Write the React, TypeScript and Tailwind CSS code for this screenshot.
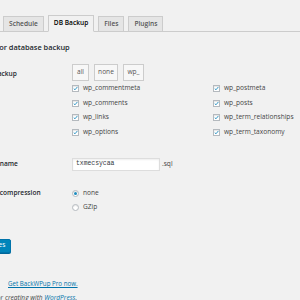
import React from "react";

const Check = () => (
  <span className="w-[7px] h-[7px] bg-white border border-[#b4b9be] shadow-[inset_0_1px_1px_rgba(0,0,0,0.1)] flex items-center justify-center shrink-0">
    <svg width="7" height="7" viewBox="0 0 10 10">
      <path d="M1.5 5.2 L4 7.6 L8.8 1.8" fill="none" stroke="#1e8cbe" strokeWidth="1.8" />
    </svg>
  </span>
);

const Radio = ({ on }: { on?: boolean }) => (
  <span className="w-[7px] h-[7px] rounded-full bg-white border border-[#b4b9be] shadow-[inset_0_1px_1px_rgba(0,0,0,0.1)] flex items-center justify-center shrink-0">
    {on && <span className="w-[3px] h-[3px] rounded-full bg-[#1e8cbe]" />}
  </span>
);

const tablesLeft = ["wp_commentmeta", "wp_comments", "wp_links", "wp_options"];
const tablesRight = ["wp_postmeta", "wp_posts", "wp_term_relationships", "wp_term_taxonomy"];

export default function App() {
  return (
    <div
      className="w-[300px] h-[300px] overflow-hidden bg-[#f1f1f1] text-[#444] text-[6.6px] leading-[1.3]"
      style={{ fontFamily: '"Open Sans", "Noto Sans", sans-serif' }}
    >
      <div className="ml-[-37px] w-[420px] pt-[16px]">
        {/* tabs */}
        <div className="flex items-end gap-[4px] border-b border-[#ccc] h-[16px]">
          <div className="h-[16px] mb-[-1px] border border-[#ccc] bg-[#e5e5e5] text-[#555] font-semibold px-[6px] flex items-center w-[36px] justify-end">General</div>
          <div className="h-[16px] mb-[-1px] border border-[#ccc] bg-[#e5e5e5] text-[#555] font-semibold px-[5px] flex items-center">Schedule</div>
          <div className="h-[17px] mb-[-1px] border border-[#ccc] border-b-[#f1f1f1] bg-[#f1f1f1] text-[#000] font-semibold px-[5px] flex items-center">DB Backup</div>
          <div className="h-[16px] mb-[-1px] border border-[#ccc] bg-[#e5e5e5] text-[#555] font-semibold px-[5px] flex items-center">Files</div>
          <div className="h-[16px] mb-[-1px] border border-[#ccc] bg-[#e5e5e5] text-[#555] font-semibold px-[5px] flex items-center">Plugins</div>
        </div>

        {/* heading */}
        <div className="mt-[10px] ml-[3px] text-[7.4px] font-semibold text-[#23282d] leading-[10px]">
          Settings for database backup
        </div>

        {/* row tables */}
        <div className="flex mt-[12px]">
          <div className="w-[109px] pt-[5px] font-semibold text-[#23282d] leading-[9px]">Tables to backup</div>
          <div className="flex flex-col">
            <div className="flex gap-[5px] h-[17px]">
              <span className="w-[17px] h-[17px] border border-[#ccc] bg-[#f7f7f7] text-[#555] flex items-center justify-center">all</span>
              <span className="w-[24px] h-[17px] border border-[#ccc] bg-[#f7f7f7] text-[#555] flex items-center justify-center">none</span>
              <span className="w-[21px] h-[17px] border border-[#ccc] bg-[#f7f7f7] text-[#555] flex items-center justify-center">wp_</span>
            </div>
            <div className="flex">
              <div className="w-[141px] flex flex-col">
                {tablesLeft.map((t) => (
                  <div key={t} className="h-[14.7px] flex items-center gap-[4px]">
                    <Check />
                    <span>{t}</span>
                  </div>
                ))}
              </div>
              <div className="flex flex-col">
                {tablesRight.map((t) => (
                  <div key={t} className="h-[14.7px] flex items-center gap-[4px]">
                    <Check />
                    <span>{t}</span>
                  </div>
                ))}
              </div>
            </div>
          </div>
        </div>

        {/* row file name */}
        <div className="flex mt-[18px] items-center h-[13px]">
          <div className="w-[109px] font-semibold text-[#23282d]">Backup file name</div>
          <div className="flex items-center">
            <div
              className="w-[88px] h-[13px] bg-white border border-[#ddd] shadow-[inset_0_1px_2px_rgba(0,0,0,0.07)] flex items-center pl-[3px] text-[#32373c] text-[6.4px]"
              style={{ fontFamily: '"Liberation Mono", "DejaVu Sans Mono", monospace' }}
            >
              txmecsycaa
            </div>
            <span className="ml-[2px]">.sql</span>
          </div>
        </div>

        {/* row compression */}
        <div className="flex mt-[15px]">
          <div className="w-[109px] font-semibold text-[#23282d] h-[15px] flex items-center">Backup file compression</div>
          <div className="flex flex-col">
            <div className="h-[15px] flex items-center gap-[4px]">
              <Radio on />
              <span>none</span>
            </div>
            <div className="h-[14px] flex items-center gap-[4px]">
              <Radio />
              <span>GZip</span>
            </div>
          </div>
        </div>

        {/* save button */}
        <div className="mt-[24px] ml-[-5px]">
          <span className="inline-flex items-center h-[14px] px-[5px] bg-[#0085ba] border border-[#0073aa] text-white rounded-[2px] shadow-[0_1px_0_#006799]">
            Save changes
          </span>
        </div>

        {/* pro link */}
        <div className="mt-[27px] ml-[45px] h-[9px] flex items-center text-[6.2px]">
          <span className="text-[#0073aa] underline">Get BackWPup Pro now.</span>
        </div>

        {/* footer */}
        <div className="mt-[5px] italic h-[9px] flex items-center">
          <span>
            Thank you for creating with <span className="text-[#0073aa] underline">WordPress</span>.
          </span>
        </div>
      </div>
    </div>
  );
}
